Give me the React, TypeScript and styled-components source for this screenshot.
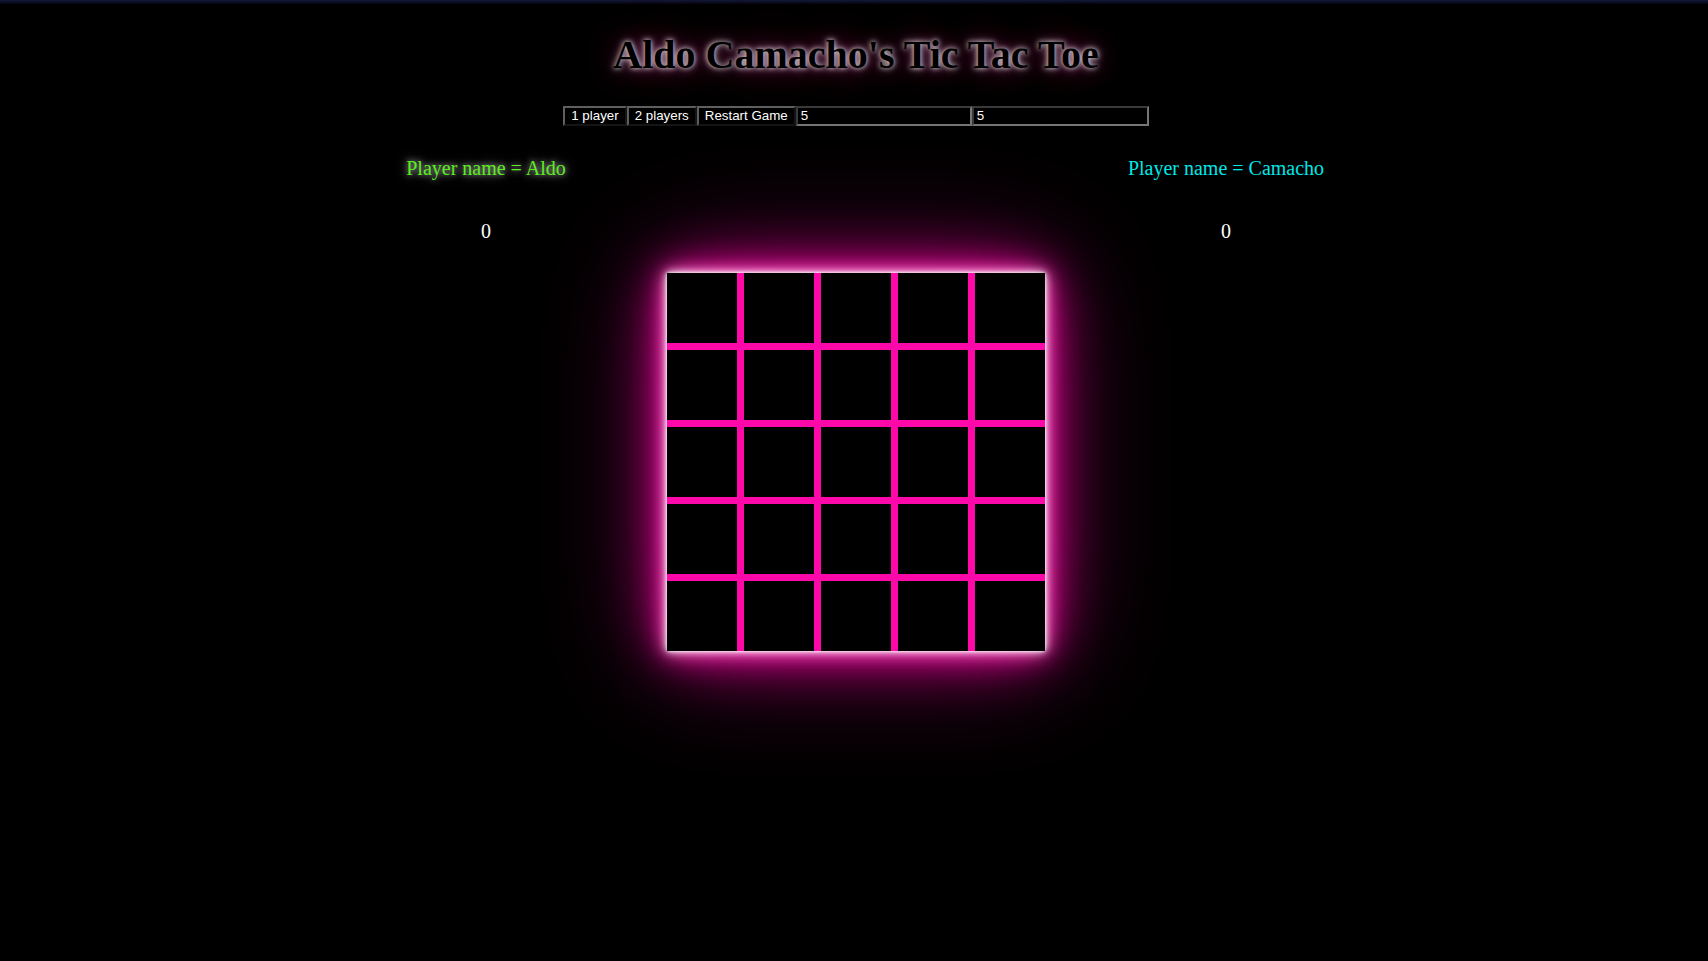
import styled, { createGlobalStyle } from 'styled-components';

const GlobalStyle = createGlobalStyle`
  html, body {
    margin: 0;
    padding: 0;
    background: #000;
  }
  body {
    min-height: 961px;
    font-family: 'Liberation Serif', 'Times New Roman', serif;
    color: #fff;
  }
`;

const TopStrip = styled.div`
  height: 4px;
  background: linear-gradient(to bottom, #141a3a, #0a0d22 60%, #04050d);
`;

const Page = styled.main`
  padding-left: 4px;
  display: flex;
  flex-direction: column;
  align-items: center;
`;

const Title = styled.h1`
  margin: 28px 0 0;
  font-size: 40px;
  line-height: 46px;
  font-weight: bold;
  color: #000;
  text-shadow:
    0 0 5px rgba(255, 255, 255, 0.85),
    0 0 10px rgba(255, 210, 245, 0.6),
    0 0 28px rgba(255, 0, 170, 0.5),
    0 0 60px rgba(255, 0, 170, 0.35);
`;

const Toolbar = styled.div`
  margin-top: 28px;
  display: flex;
  height: 20px;
`;

const ToolButton = styled.button`
  height: 20px;
  padding: 0 6px 1px;
  background: #000;
  color: #fff;
  font-family: 'Liberation Sans', Arial, sans-serif;
  font-size: 13.33px;
  line-height: 14px;
  border: 2px solid;
  border-color: #5f5f5f #151515 #151515 #5f5f5f;
  cursor: pointer;
`;

const SizeInput = styled.input<{ $width: number }>`
  box-sizing: border-box;
  width: ${({ $width }) => $width}px;
  height: 20px;
  padding: 0 3px 1px;
  background: #000;
  color: #fff;
  font-family: 'Liberation Sans', Arial, sans-serif;
  font-size: 13.33px;
  border: 2px solid;
  border-color: #3a3a3a #767676 #767676 #3a3a3a;
  outline: none;
`;

const Players = styled.section`
  margin-top: 31px;
  display: grid;
  grid-template-columns: 370px 370px;
  column-gap: 370px;
  justify-content: center;
`;

const Player = styled.div`
  display: flex;
  flex-direction: column;
  align-items: center;
  font-size: 20px;
  line-height: 23px;
`;

const PlayerName = styled.div<{ $color: string; $glow?: boolean }>`
  color: ${({ $color }) => $color};
  text-shadow: ${({ $glow }) =>
    $glow ? '0 0 6px rgba(255,255,255,0.7), 0 0 14px rgba(255,255,255,0.4)' : 'none'};
`;

const Score = styled.div`
  margin-top: 40px;
  color: #fff;
`;

const Board = styled.div`
  margin-top: 30px;
  display: grid;
  grid-template-columns: repeat(5, 70px);
  grid-template-rows: repeat(5, 70px);
  gap: 7px;
  background: #ff08aa;
  box-shadow:
    0 0 3px #fff,
    0 0 8px #fff,
    0 0 16px #ff9ad8,
    0 0 30px #ff10a8,
    0 0 60px rgba(255, 0, 170, 0.8),
    0 0 110px rgba(255, 0, 170, 0.5);
`;

const Cell = styled.div`
  background: #000;
`;

const cells = Array.from({ length: 25 }, (_, i) => i);

export default function App() {
  return (
    <>
      <GlobalStyle />
      <TopStrip />
      <Page>
        <Title>Aldo Camacho's Tic Tac Toe</Title>
        <Toolbar>
          <ToolButton>1 player</ToolButton>
          <ToolButton>2 players</ToolButton>
          <ToolButton>Restart Game</ToolButton>
          <SizeInput $width={176} defaultValue="5" />
          <SizeInput $width={177} defaultValue="5" />
        </Toolbar>
        <Players>
          <Player>
            <PlayerName $color="#5bef1e" $glow>
              Player name = Aldo
            </PlayerName>
            <Score>0</Score>
          </Player>
          <Player>
            <PlayerName $color="#00e8e8">Player name = Camacho</PlayerName>
            <Score>0</Score>
          </Player>
        </Players>
        <Board>
          {cells.map(i => (
            <Cell key={i} />
          ))}
        </Board>
      </Page>
    </>
  );
}
